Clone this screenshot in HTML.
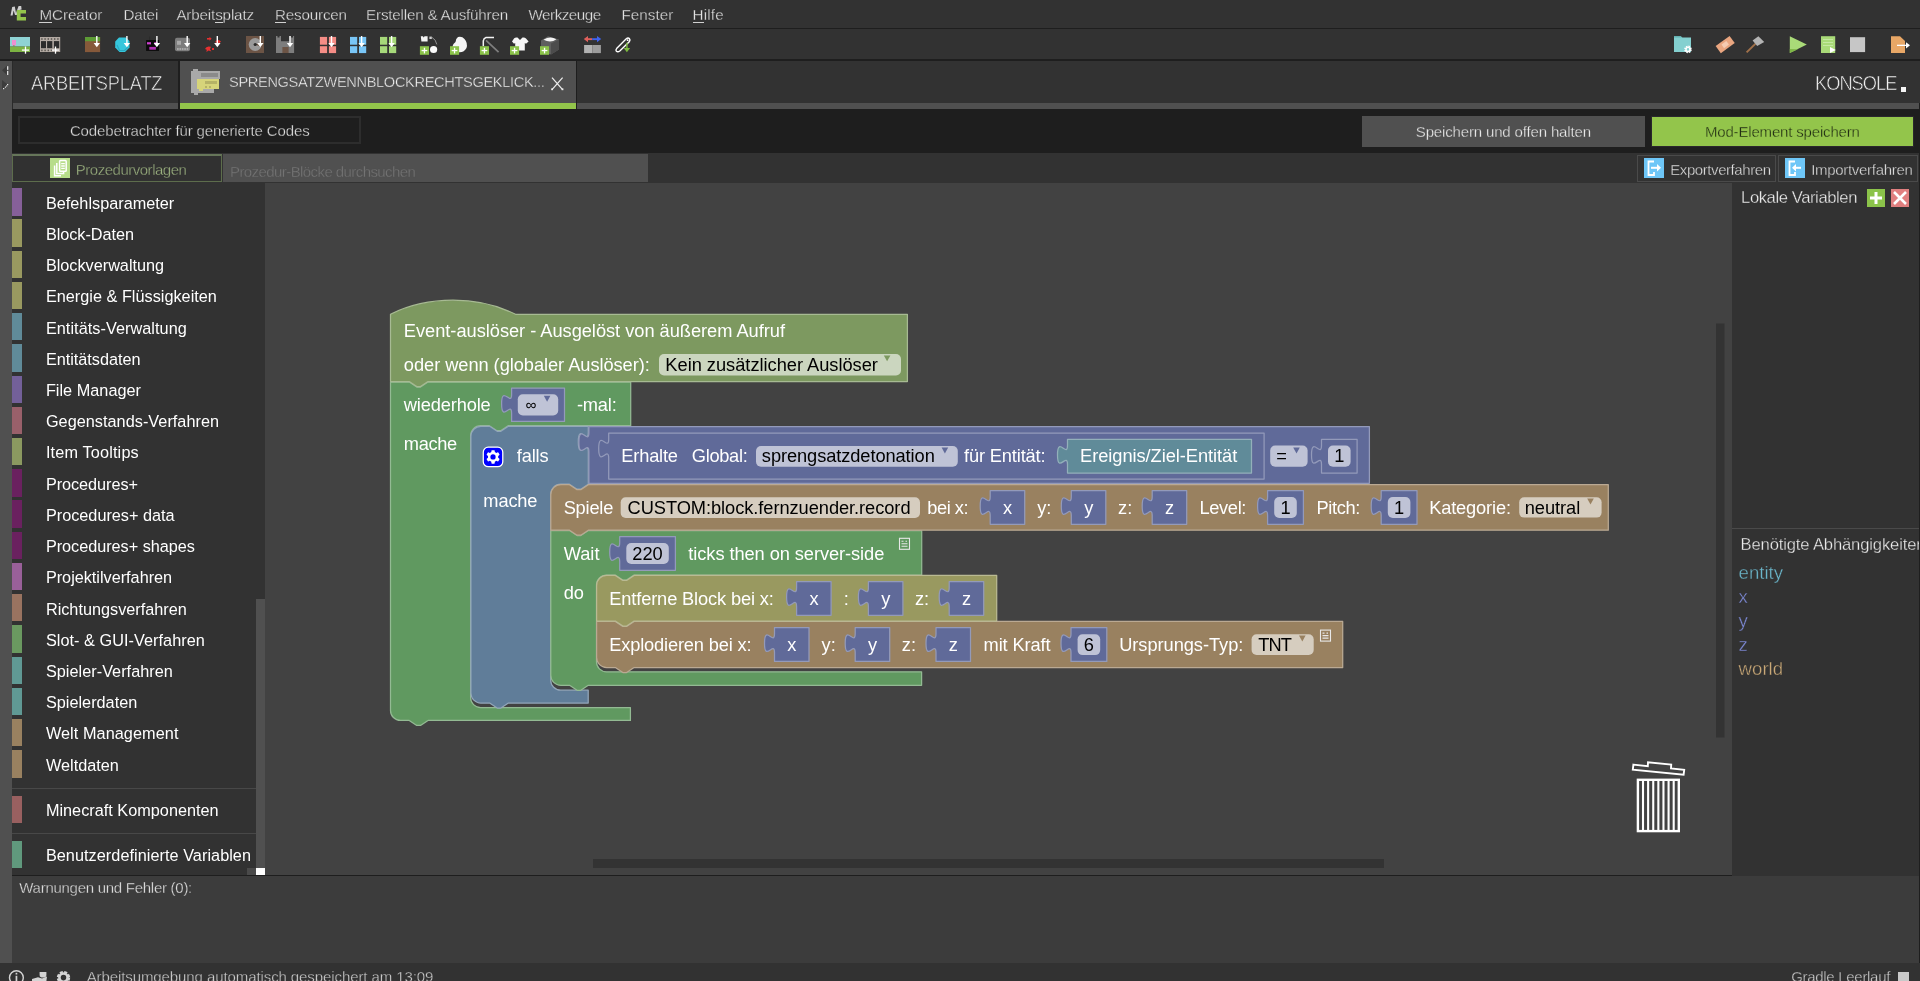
<!DOCTYPE html>
<html lang="de"><head><meta charset="utf-8"><title>MCreator</title>
<style>
html,body{margin:0;padding:0;background:#323232;}
body{width:1920px;height:981px;overflow:hidden;position:relative;font-family:"Liberation Sans", sans-serif;}
#app{position:absolute;left:0;top:0;width:1920px;height:981px;will-change:transform;}
.a{position:absolute;}
.t{position:absolute;white-space:pre;font-family:"Liberation Sans", sans-serif;}
svg{position:absolute;overflow:visible;}
svg text{font-family:"Liberation Sans", sans-serif;white-space:pre;}
</style></head><body><div id="app">
<div class="a" style="left:0px;top:0px;width:1920px;height:28px;background:#323232;"></div>
<div class="a" style="left:0px;top:28px;width:1920px;height:1px;background:#1e1e1e;"></div>
<div class="a" style="left:0px;top:29px;width:1920px;height:30px;background:#323232;"></div>
<div class="a" style="left:0px;top:59px;width:1920px;height:2px;background:#1e1e1e;"></div>
<div class="a" style="left:0px;top:61px;width:1920px;height:42px;background:#323232;"></div>
<div class="a" style="left:12px;top:103px;width:1908px;height:6px;background:#505050;"></div>
<div class="a" style="left:12px;top:109px;width:1908px;height:44px;background:#1e1e1e;"></div>
<div class="a" style="left:12px;top:153px;width:1908px;height:30px;background:#323232;"></div>
<div class="a" style="left:12px;top:183px;width:253px;height:692px;background:#323232;"></div>
<div class="a" style="left:265px;top:183px;width:1467px;height:692px;background:#424242;"></div>
<div class="a" style="left:1732px;top:183px;width:188px;height:692px;background:#323232;"></div>
<div class="a" style="left:12px;top:875px;width:1720px;height:1px;background:#1e1e1e;"></div>
<div class="a" style="left:1732px;top:875px;width:187px;height:1px;background:#323232;"></div>
<div class="a" style="left:12px;top:876px;width:1908px;height:87px;background:#3c3c3c;"></div>
<div class="a" style="left:0px;top:963px;width:1920px;height:18px;background:#323232;"></div>
<div class="a" style="left:0px;top:61px;width:12px;height:902px;background:#505050;"></div>
<div class="a" style="left:1919px;top:61px;width:1px;height:902px;background:#1e1e1e;"></div>
<div class="t" style="left:39.40px;top:4.93px;font-size:15.2px;line-height:20px;color:#e2e2e2;letter-spacing:-0.044px;-webkit-text-stroke:0.3px #323232">MCreator</div>
<div class="a" style="left:39.4px;top:22px;width:12.7px;height:1px;background:#d0d0d0;"></div>
<div class="t" style="left:123.40px;top:4.93px;font-size:15.2px;line-height:20px;color:#e2e2e2;letter-spacing:-0.137px;-webkit-text-stroke:0.3px #323232">Datei</div>
<div class="t" style="left:176.40px;top:4.93px;font-size:15.2px;line-height:20px;color:#e2e2e2;letter-spacing:-0.151px;-webkit-text-stroke:0.3px #323232">Arbeitsplatz</div>
<div class="a" style="left:215.2px;top:22px;width:7.6px;height:1px;background:#d0d0d0;"></div>
<div class="t" style="left:275.00px;top:4.93px;font-size:15.2px;line-height:20px;color:#e2e2e2;letter-spacing:-0.179px;-webkit-text-stroke:0.3px #323232">Resourcen</div>
<div class="a" style="left:275.0px;top:22px;width:11.0px;height:1px;background:#d0d0d0;"></div>
<div class="t" style="left:366.10px;top:4.93px;font-size:15.2px;line-height:20px;color:#e2e2e2;letter-spacing:-0.199px;-webkit-text-stroke:0.3px #323232">Erstellen &amp; Ausführen</div>
<div class="t" style="left:528.50px;top:4.93px;font-size:15.2px;line-height:20px;color:#e2e2e2;letter-spacing:-0.478px;-webkit-text-stroke:0.3px #323232">Werkzeuge</div>
<div class="t" style="left:621.50px;top:4.93px;font-size:15.2px;line-height:20px;color:#e2e2e2;letter-spacing:0.038px;-webkit-text-stroke:0.3px #323232">Fenster</div>
<div class="t" style="left:692.60px;top:4.93px;font-size:15.2px;line-height:20px;color:#e2e2e2;letter-spacing:0.158px;-webkit-text-stroke:0.3px #323232">Hilfe</div>
<div class="a" style="left:692.6px;top:22px;width:11.0px;height:1px;background:#d0d0d0;"></div>
<svg style="left:10px;top:4px" width="18" height="19" viewBox="0 0 18 19">
<path d="M0.5 11.5 L2.2 3 L4.8 2.6 L6 9 L8.6 2 L11.2 2 L11.6 5.5 L9.5 6 L7 11 L5 11 L3.6 6.5 L2.6 11.5Z" fill="#cfcfcf"/>
<path d="M6.8 6 H16 V9.6 H10.6 V13 H16 V16.6 H6.8Z" fill="#93c54b"/></svg>
<svg style="left:0;top:29px" width="1920" height="30" viewBox="0 29 1920 30"><rect x="10" y="37" width="20" height="9.6" fill="#8fd3d4" /><rect x="10" y="46.6" width="20" height="5.4" fill="#7cb342" /><rect x="12" y="40" width="4" height="5.3" fill="#ee8fd0" /><rect x="13.4" y="45" width="1" height="1.6" fill="#a1714a" /><rect x="24.85" y="46.5" width="1.3" height="7.2" fill="#fff" /><rect x="21.9" y="49.45" width="7.2" height="1.3" fill="#fff" /><rect x="40" y="37" width="20.2" height="15" fill="#b3aaa3" /><rect x="41" y="41.1" width="5" height="7.1" fill="#2b2b2b" /><rect x="47.1" y="41.1" width="5.2" height="7.1" fill="#2b2b2b" /><rect x="53.9" y="41.1" width="5.3" height="7.1" fill="#2b2b2b" /><rect x="41.2" y="38.2" width="1.4" height="1.6" fill="#5a5651" /><rect x="41.2" y="49.6" width="1.4" height="1.6" fill="#5a5651" /><rect x="44.400000000000006" y="38.2" width="1.4" height="1.6" fill="#5a5651" /><rect x="44.400000000000006" y="49.6" width="1.4" height="1.6" fill="#5a5651" /><rect x="47.6" y="38.2" width="1.4" height="1.6" fill="#5a5651" /><rect x="47.6" y="49.6" width="1.4" height="1.6" fill="#5a5651" /><rect x="50.800000000000004" y="38.2" width="1.4" height="1.6" fill="#5a5651" /><rect x="50.800000000000004" y="49.6" width="1.4" height="1.6" fill="#5a5651" /><rect x="54.0" y="38.2" width="1.4" height="1.6" fill="#5a5651" /><rect x="54.0" y="49.6" width="1.4" height="1.6" fill="#5a5651" /><rect x="57.2" y="38.2" width="1.4" height="1.6" fill="#5a5651" /><rect x="57.2" y="49.6" width="1.4" height="1.6" fill="#5a5651" /><rect x="54.85" y="46.5" width="1.3" height="7.2" fill="#fff" /><rect x="51.9" y="49.45" width="7.2" height="1.3" fill="#fff" /><rect x="85" y="37" width="15.1" height="15.1" fill="#86593a" /><rect x="85" y="37" width="15.1" height="4.2" fill="#5d9b35" /><rect x="96.1" y="36" width="1.4" height="8.200000000000003" fill="#ffffff"/><path d="M 93.6,43.0 H 100.0 L 96.8,47.2 Z" fill="#ffffff"/><path d="M119 37.5 H126 L129.5 41 V47.5 L125 52 H119.5 L115.2 47.5 V41.5Z" fill="#35c6dc"/><path d="M117 45 L119.5 50.5 H124.5 L128 47" stroke="#2aa9c0" stroke-width="1.2" fill="none"/><rect x="126.2" y="36" width="1.4" height="8.200000000000003" fill="#ffffff"/><path d="M 123.7,43.0 H 130.1 L 126.9,47.2 Z" fill="#ffffff"/><rect x="146.1" y="40" width="12.9" height="10.9" fill="#0b0b0b" /><rect x="147" y="42.2" width="4" height="2.2" fill="#cf3fd0" /><rect x="154.2" y="42.2" width="3.4" height="2.2" fill="#cf3fd0" /><rect x="149.3" y="46.9" width="6.6" height="2.8" fill="#b02fb2" /><rect x="149" y="36.5" width="1.2" height="3.5" fill="#2a2a2a" /><rect x="156.20000000000002" y="36" width="1.4" height="8.200000000000003" fill="#ffffff"/><path d="M 153.70000000000002,43.0 H 160.1 L 156.9,47.2 Z" fill="#ffffff"/><rect x="175" y="37.8" width="15" height="13.4" rx="2" fill="#7c7c7c"/><rect x="177" y="40.8" width="4" height="4" fill="#a9a9a9" /><rect x="177.0" y="48" width="1.7" height="2.1" fill="#a9a9a9" /><rect x="179.4" y="48" width="1.7" height="2.1" fill="#a9a9a9" /><rect x="181.8" y="48" width="1.7" height="2.1" fill="#a9a9a9" /><rect x="184.2" y="48" width="1.7" height="2.1" fill="#a9a9a9" /><rect x="186.6" y="48" width="1.7" height="2.1" fill="#a9a9a9" /><rect x="186.5" y="36" width="1.4" height="8.200000000000003" fill="#ffffff"/><path d="M 184.0,43.0 H 190.39999999999998 L 187.2,47.2 Z" fill="#ffffff"/><g fill="#e53030"><rect x="207" y="38" width="3" height="1.6"/><path d="M209.5 36.8 L211.6 38.8 L209.5 40.8Z"/><path d="M215.5 41.2 Q218.5 38.5 221 41.5 L219.5 43 L215.5 42.5Z"/><path d="M205 49 Q206 46.4 208.6 46.4 L211 46.8 L210 49.2 L211.4 51.6 L208.6 50.4 L206.4 52 L206.8 49.8Z"/><rect x="212" y="48" width="2" height="2"/></g><rect x="216.60000000000002" y="36" width="1.4" height="8.200000000000003" fill="#ffffff"/><path d="M 214.10000000000002,43.0 H 220.5 L 217.3,47.2 Z" fill="#ffffff"/><rect x="246" y="36" width="18" height="17" fill="#6c5445" /><circle cx="255.2" cy="44.5" r="6.5" fill="#9a9a9a"/><path d="M255.2 44.5 L262 41.5 V47.5Z" fill="#6c5445"/><circle cx="255.2" cy="44.5" r="1.6" fill="#2b2b2b"/><rect x="259.6" y="36" width="1.4" height="8.200000000000003" fill="#ffffff"/><path d="M 257.1,43.0 H 263.5 L 260.3,47.2 Z" fill="#ffffff"/><path d="M276 36 H277.5 V37.5 H279.5 V36 H281 V41.3 H289.6 V36 H291 V37.5 H293 V36 H294.1 V53 H276Z" fill="#7d7d7d"/><rect x="282.4" y="47" width="6.2" height="6" fill="#6c5445" /><rect x="289.3" y="36" width="1.4" height="8.200000000000003" fill="#ffffff"/><path d="M 286.8,43.0 H 293.2 L 290,47.2 Z" fill="#ffffff"/><rect x="319.9" y="36.9" width="7.2" height="7.8" fill="#f58d86" /><rect x="328.9" y="36.9" width="7.2" height="7.8" fill="#f58d86" /><rect x="319.9" y="46.2" width="7.2" height="6.9" fill="#f58d86" /><rect x="328.9" y="46.2" width="7.2" height="6.9" fill="#f58d86" /><rect x="330.8" y="36" width="1.4" height="8.200000000000003" fill="#ffffff"/><path d="M 328.3,43.0 H 334.7 L 331.5,47.2 Z" fill="#ffffff"/><rect x="350" y="36.9" width="7.2" height="7.8" fill="#79c6f7" /><rect x="359" y="36.9" width="7.2" height="7.8" fill="#79c6f7" /><rect x="350" y="46.2" width="7.2" height="6.9" fill="#79c6f7" /><rect x="359" y="46.2" width="7.2" height="6.9" fill="#79c6f7" /><rect x="360.90000000000003" y="36" width="1.4" height="8.200000000000003" fill="#ffffff"/><path d="M 358.40000000000003,43.0 H 364.8 L 361.6,47.2 Z" fill="#ffffff"/><rect x="380" y="36.9" width="7.2" height="7.8" fill="#a6d97a" /><rect x="389" y="36.9" width="7.2" height="7.8" fill="#a6d97a" /><rect x="380" y="46.2" width="7.2" height="6.9" fill="#a6d97a" /><rect x="389" y="46.2" width="7.2" height="6.9" fill="#a6d97a" /><rect x="390.90000000000003" y="36" width="1.4" height="8.200000000000003" fill="#ffffff"/><path d="M 388.40000000000003,43.0 H 394.8 L 391.6,47.2 Z" fill="#ffffff"/><rect x="419.9" y="46.2" width="9.1" height="8.6" fill="#8bc34a" /><rect x="423.79999999999995" y="47.800000000000004" width="1.3" height="5.6" fill="#fff" /><rect x="421.59999999999997" y="49.900000000000006" width="5.7" height="1.3" fill="#fff" /><path d="M420.8 36.2 H423 L423.6 37.4 L424.6 36.2 H427.6 V41.6 H421.4Z" fill="#f4f4f4"/><rect x="429.4" y="36.6" width="2.4" height="2.4" fill="#cfcfcf"/><path d="M431.8 37.2 Q436 39.5 436.8 44.4" stroke="#9a9a9a" stroke-width="0.9" fill="none"/><circle cx="433.6" cy="49.5" r="3.6" fill="#fbfbfb"/><path d="M458 37 Q462 36 464.5 39 Q468 43 466.5 48 Q464 52.8 458.5 52.2 L455 50 L452.4 46.5 Q453 43.5 455.5 42 Q455.8 38.5 458 37Z" fill="#f6f6f6"/><rect x="450" y="46.2" width="9.1" height="8.6" fill="#8bc34a" /><rect x="453.9" y="47.800000000000004" width="1.3" height="5.6" fill="#fff" /><rect x="451.7" y="49.900000000000006" width="5.7" height="1.3" fill="#fff" /><path d="M486 40.4 L498.6 52.2" stroke="#7f7f7f" stroke-width="1.7"/><path d="M483.3 46.2 V40.8 Q483.6 38.2 486 37.5 H494" stroke="#f4f4f4" stroke-width="1.5" fill="none"/><rect x="479.9" y="46.2" width="9.1" height="8.6" fill="#8bc34a" /><rect x="483.79999999999995" y="47.800000000000004" width="1.3" height="5.6" fill="#fff" /><rect x="481.59999999999997" y="49.900000000000006" width="5.7" height="1.3" fill="#fff" /><path d="M514 38.5 Q515.5 37 517.5 37.6 L520 40 L522.5 37.6 Q524.5 37 526 38.5 L528.6 41.5 L526 43.8 L524.8 43 V50.6 H515.2 V43 L514 43.8 L512 41.5Z" fill="#f7f7f7"/><rect x="510" y="46.2" width="9.1" height="8.6" fill="#8bc34a" /><rect x="513.9" y="47.800000000000004" width="1.3" height="5.6" fill="#fff" /><rect x="511.7" y="49.900000000000006" width="5.7" height="1.3" fill="#fff" /><path d="M541 40.5 L548 36.3 L559 39.5 V49.5 L551 54.6 L541 51.5Z" fill="#5f5f5f"/><path d="M551 43.5 L559 39.5 V49.5 L551 54.6Z" fill="#4c4c4c"/><path d="M543.5 39.8 Q550 35.5 556.4 39.2 Q551 43.4 543.5 39.8Z" fill="#f4f4f4"/><rect x="540" y="46.2" width="9.1" height="8.6" fill="#8bc34a" /><rect x="543.9" y="47.800000000000004" width="1.3" height="5.6" fill="#fff" /><rect x="541.7" y="49.900000000000006" width="5.7" height="1.3" fill="#fff" /><rect x="586.5" y="38.2" width="5.8" height="1.9" fill="#e0605c" /><path d="M583.8 39.1 L588 36 V42.2Z" fill="#e0605c"/><rect x="592.2" y="38.2" width="5.6" height="1.9" fill="#3f63ee" /><path d="M601.2 39.1 L597 36 V42.2Z" fill="#3f63ee"/><rect x="584.1" y="45" width="8.4" height="8.1" fill="#b2b2b2" /><rect x="592.5" y="45" width="8.4" height="8.1" fill="#9d9d9d" /><path d="M616.6 48.6 L626 39 Q628 37.4 629.4 38.6 Q630.6 40 629 42 L619.8 51 Q617.8 52.4 616.4 51.2 Q615.4 50 616.6 48.6Z" fill="none" stroke="#ffffff" stroke-width="1.4"/><circle cx="627.6" cy="40.2" r="0.9" fill="#fff"/><rect x="626.1999999999999" y="42.8" width="1.4" height="6.400000000000006" fill="#7cb83f"/><path d="M 623.6999999999999,48.0 H 630.1 L 626.9,52.2 Z" fill="#7cb83f"/><path d="M1674 36.2 H1680.6 L1682.4 37.6 H1691 V52 H1674Z" fill="#84d0d0"/><path d="M1674 36.2 H1680.6 L1682.4 37.6 H1674Z" fill="#62b4b4"/><circle cx="1688" cy="49.4" r="2.7" fill="none" stroke="#fff" stroke-width="2.2" stroke-dasharray="1.4 0.72"/><circle cx="1688" cy="49.4" r="2" fill="none" stroke="#fff" stroke-width="1.4"/><g transform="rotate(-36 1725.2 44.6)"><rect x="1716.6" y="40.2" width="17.2" height="8.8" fill="#eaa680"/><rect x="1722.2" y="42.4" width="6" height="4.4" fill="#f5cbb2"/></g><path d="M1746.6 52.4 L1755.6 43.6" stroke="#a1714a" stroke-width="2"/><path d="M1752.6 40.6 L1758.4 36.2 L1764.2 42 L1757.2 46Z" fill="#b4b4b4"/><path d="M1789.8 36.2 L1806.8 44.6 L1789.8 53Z" fill="#a9da78"/><path d="M1789.8 49 L1798 49.2 L1789.8 53Z" fill="#7fb648"/><rect x="1821" y="36.2" width="14.2" height="16.8" fill="#a9da78" /><rect x="1823" y="39" width="10" height="0.9" fill="#c9eaa8" /><rect x="1823" y="42" width="10" height="0.9" fill="#c9eaa8" /><rect x="1823" y="45" width="10" height="0.9" fill="#c9eaa8" /><path d="M1830 47 L1835.8 50 L1830 53Z" fill="#fff"/><rect x="1850" y="37.2" width="15.1" height="14.9" fill="#c6c6c6" /><path d="M1891 36.2 H1900 L1905 41 V53 H1891Z" fill="#e8a766"/><rect x="1897" y="44.7" width="10" height="1.3" fill="#fff" /><path d="M1906 42.2 L1910 45.3 L1906 48.4Z" fill="#fff"/></svg>
<div class="a" style="left:178px;top:61px;width:2px;height:48px;background:#1e1e1e;"></div>
<div class="a" style="left:180px;top:61px;width:396px;height:42px;background:#505050;"></div>
<div class="a" style="left:180px;top:103px;width:396px;height:6px;background:#93c54b;"></div>
<div class="a" style="left:576px;top:61px;width:1px;height:48px;background:#1e1e1e;"></div>
<div class="a" style="left:577px;top:61px;width:1343px;height:42px;background:#323232;"></div>
<div class="a" style="left:12px;top:61px;width:1px;height:48px;background:#2a2a2a;"></div>
<svg style="left:0px;top:61px" width="12" height="32" viewBox="0 61 12 32"><path d="M7 65.5 V75 L2 70.2Z" fill="#3c3c3c"/><rect x="7" y="66.2" width="1.3" height="3.6" fill="#dcdcdc"/><rect x="7" y="71" width="1.3" height="4" fill="#dcdcdc"/><path d="M2 80 V89.4 L7.6 84.6Z" fill="#3c3c3c"/><rect x="3" y="88" width="1.2" height="1.2" fill="#e4e4e4"/><rect x="4.9" y="86.6" width="1.1" height="1.1" fill="#e4e4e4"/><rect x="6.1" y="85.4" width="1.1" height="1.1" fill="#e4e4e4"/><rect x="7" y="84" width="1.2" height="1.2" fill="#e4e4e4"/></svg>
<div class="t" style="left:30.80px;top:69.97px;font-size:20.3px;line-height:26px;color:#f2f2f2;letter-spacing:-0.207px;transform:scaleX(0.9);transform-origin:0 0;-webkit-text-stroke:0.6px #323232;">ARBEITSPLATZ</div>
<div class="t" style="left:229.00px;top:73.24px;font-size:14.6px;line-height:19px;color:#f2f2f2;letter-spacing:-0.338px;-webkit-text-stroke:0.35px #505050;">SPRENGSATZWENNBLOCKRECHTSGEKLICK...</div>
<div class="t" style="left:1814.80px;top:69.97px;font-size:20.3px;line-height:26px;color:#f2f2f2;letter-spacing:-1.099px;transform:scaleX(0.9);transform-origin:0 0;-webkit-text-stroke:0.6px #323232;">KONSOLE</div>
<div class="a" style="left:1901px;top:87px;width:5px;height:5px;background:#f5f5f5;"></div>
<svg style="left:550px;top:75px" width="15" height="17" viewBox="550 75 15 17"><path d="M552 77.6 L562.6 89.6 M562.6 77.6 L552 89.6" stroke="#ececec" stroke-width="1.25" fill="none"/><rect x="551.2" y="88.4" width="1.8" height="1.8" fill="#ececec"/><rect x="561.6" y="88.4" width="1.8" height="1.8" fill="#ececec"/></svg>
<svg style="left:190px;top:68px" width="31" height="28" viewBox="0 0 31 28" shape-rendering="crispEdges">
<rect x="1" y="3" width="8" height="22" fill="#a9a9a9"/><rect x="3" y="1" width="5" height="3" fill="#a9a9a9"/><rect x="4" y="24" width="4" height="3" fill="#a9a9a9"/>
<rect x="8" y="3" width="22" height="8" fill="#a9a9a9"/><rect x="11" y="5" width="17" height="4" fill="#8a8a8a"/>
<rect x="8" y="19" width="16" height="6" fill="#a9a9a9"/>
<rect x="7" y="11" width="22" height="10" fill="#d6d47a"/><rect x="9" y="20" width="4" height="3" fill="#d6d47a"/>
<rect x="15" y="13" width="12" height="3" fill="#b5b266"/><rect x="15" y="18" width="2" height="1.5" fill="#b5b266"/><rect x="19" y="18" width="2" height="1.5" fill="#b5b266"/>
</svg>
<div class="a" style="left:18px;top:116px;width:343px;height:28px;background:#1e1e1e;box-sizing:border-box;border:2px solid #2d2d2d;"></div>
<div class="t" style="left:69.90px;top:120.80px;font-size:15px;line-height:20px;color:#e0e0e0;letter-spacing:-0.134px;-webkit-text-stroke:0.3px #1e1e1e;">Codebetrachter für generierte Codes</div>
<div class="a" style="left:1362px;top:116px;width:283px;height:31px;background:#505050;"></div>
<div class="t" style="left:1415.80px;top:122.30px;font-size:15px;line-height:20px;color:#ececec;letter-spacing:-0.153px;-webkit-text-stroke:0.3px #505050;">Speichern und offen halten</div>
<div class="a" style="left:1651px;top:116px;width:263px;height:31px;background:#2a272d;"></div>
<div class="a" style="left:1652px;top:117px;width:261px;height:29px;background:#93c54b;"></div>
<div class="t" style="left:1704.90px;top:122.10px;font-size:15px;line-height:20px;color:#1f2a12;letter-spacing:-0.170px;-webkit-text-stroke:0.3px #93c54b;">Mod-Element speichern</div>
<div class="a" style="left:12px;top:154px;width:210px;height:28px;background:#313131;box-sizing:border-box;border:1px solid #5d6d4c;border-top:2px solid #66765a;"></div>
<svg style="left:50px;top:158px" width="20" height="20" viewBox="0 0 20 20"><rect width="20" height="20" fill="#b7dd8a"/>
<path d="M4.6 7.6 V17.8 H11" fill="none" stroke="#fff" stroke-width="1.5"/><path d="M6.8 5 V15.6 H13.6 V14" fill="none" stroke="#fff" stroke-width="1.5"/>
<rect x="9.6" y="2.6" width="6.6" height="10.6" rx="0.8" fill="none" stroke="#fff" stroke-width="1.5"/><path d="M11.2 5.6 H14.8 M11.2 8 H14.8 M11.2 10.4 H14.8" stroke="#fff" stroke-width="1.3"/></svg>
<div class="t" style="left:75.80px;top:160.20px;font-size:15px;line-height:20px;color:#9cb280;letter-spacing:-0.488px;-webkit-text-stroke:0.3px #313131;">Prozedurvorlagen</div>
<div class="a" style="left:223px;top:154px;width:425px;height:28px;background:#505050;"></div>
<div class="t" style="left:230.00px;top:162.10px;font-size:15px;line-height:20px;color:#747474;letter-spacing:-0.578px;-webkit-text-stroke:0.3px #505050;">Prozedur-Blöcke durchsuchen</div>
<div class="a" style="left:1637px;top:155px;width:139px;height:27px;background:#323232;box-sizing:border-box;border:1px solid #4a4a4a;"></div>
<div class="a" style="left:1778px;top:155px;width:140px;height:27px;background:#323232;box-sizing:border-box;border:1px solid #4a4a4a;"></div>
<svg style="left:1644px;top:158px" width="20" height="20" viewBox="0 0 20 20"><rect width="20" height="20" fill="#6ec6f7"/>
<path d="M10 3.5 H4.5 V17 H10 V14" fill="none" stroke="#fff" stroke-width="1.8"/><rect x="7" y="8.8" width="8" height="2" fill="#fff"/><path d="M13 6 L17 9.8 L13 13.6Z" fill="#fff"/></svg>
<div class="t" style="left:1670.30px;top:159.50px;font-size:15px;line-height:20px;color:#dedede;letter-spacing:-0.430px;-webkit-text-stroke:0.3px #323232;">Exportverfahren</div>
<svg style="left:1785px;top:158px" width="20" height="20" viewBox="0 0 20 20"><rect width="20" height="20" fill="#6ec6f7"/>
<path d="M10 3.5 H4.5 V17 H10 V14" fill="none" stroke="#fff" stroke-width="1.8"/><rect x="9" y="8.8" width="7" height="2" fill="#fff"/><path d="M11 6 L7 9.8 L11 13.6Z" fill="#fff"/></svg>
<div class="t" style="left:1811.20px;top:159.50px;font-size:15px;line-height:20px;color:#dedede;letter-spacing:-0.307px;-webkit-text-stroke:0.3px #323232;">Importverfahren</div>
<div class="a" style="left:12px;top:188.2px;width:10px;height:27.4px;background:#866099;"></div>
<div class="t" style="left:45.90px;top:192.67px;font-size:16.25px;line-height:21px;color:#ffffff;letter-spacing:0.007px;">Befehlsparameter</div>
<div class="a" style="left:12px;top:219.42px;width:10px;height:27.4px;background:#999960;"></div>
<div class="t" style="left:45.90px;top:223.89px;font-size:16.25px;line-height:21px;color:#ffffff;letter-spacing:-0.038px;">Block-Daten</div>
<div class="a" style="left:12px;top:250.64px;width:10px;height:27.4px;background:#999960;"></div>
<div class="t" style="left:45.90px;top:255.11px;font-size:16.25px;line-height:21px;color:#ffffff;letter-spacing:-0.007px;">Blockverwaltung</div>
<div class="a" style="left:12px;top:281.86px;width:10px;height:27.4px;background:#999960;"></div>
<div class="t" style="left:45.90px;top:286.33px;font-size:16.25px;line-height:21px;color:#ffffff;letter-spacing:0.013px;">Energie &amp; Flüssigkeiten</div>
<div class="a" style="left:12px;top:313.08px;width:10px;height:27.4px;background:#608b99;"></div>
<div class="t" style="left:45.90px;top:317.55px;font-size:16.25px;line-height:21px;color:#ffffff;letter-spacing:0.050px;">Entitäts-Verwaltung</div>
<div class="a" style="left:12px;top:344.3px;width:10px;height:27.4px;background:#608b99;"></div>
<div class="t" style="left:45.90px;top:348.77px;font-size:16.25px;line-height:21px;color:#ffffff;letter-spacing:-0.017px;">Entitätsdaten</div>
<div class="a" style="left:12px;top:375.52px;width:10px;height:27.4px;background:#736099;"></div>
<div class="t" style="left:45.90px;top:379.99px;font-size:16.25px;line-height:21px;color:#ffffff;letter-spacing:0.026px;">File Manager</div>
<div class="a" style="left:12px;top:406.74px;width:10px;height:27.4px;background:#99606a;"></div>
<div class="t" style="left:45.90px;top:411.21px;font-size:16.25px;line-height:21px;color:#ffffff;letter-spacing:0.031px;">Gegenstands-Verfahren</div>
<div class="a" style="left:12px;top:437.96px;width:10px;height:27.4px;background:#8b9960;"></div>
<div class="t" style="left:45.90px;top:442.43px;font-size:16.25px;line-height:21px;color:#ffffff;letter-spacing:0.157px;">Item Tooltips</div>
<div class="a" style="left:12px;top:469.18px;width:10px;height:27.4px;background:#6a215f;"></div>
<div class="t" style="left:45.90px;top:473.65px;font-size:16.25px;line-height:21px;color:#ffffff;letter-spacing:-0.053px;">Procedures+</div>
<div class="a" style="left:12px;top:500.4px;width:10px;height:27.4px;background:#6a215f;"></div>
<div class="t" style="left:45.90px;top:504.87px;font-size:16.25px;line-height:21px;color:#ffffff;letter-spacing:0.001px;">Procedures+ data</div>
<div class="a" style="left:12px;top:531.62px;width:10px;height:27.4px;background:#6a215f;"></div>
<div class="t" style="left:45.90px;top:536.09px;font-size:16.25px;line-height:21px;color:#ffffff;letter-spacing:-0.029px;">Procedures+ shapes</div>
<div class="a" style="left:12px;top:562.84px;width:10px;height:27.4px;background:#996099;"></div>
<div class="t" style="left:45.90px;top:567.31px;font-size:16.25px;line-height:21px;color:#ffffff;letter-spacing:-0.013px;">Projektilverfahren</div>
<div class="a" style="left:12px;top:594.06px;width:10px;height:27.4px;background:#997360;"></div>
<div class="t" style="left:45.90px;top:598.53px;font-size:16.25px;line-height:21px;color:#ffffff;letter-spacing:0.001px;">Richtungsverfahren</div>
<div class="a" style="left:12px;top:625.28px;width:10px;height:27.4px;background:#6a9960;"></div>
<div class="t" style="left:45.90px;top:629.75px;font-size:16.25px;line-height:21px;color:#ffffff;letter-spacing:0.043px;">Slot- &amp; GUI-Verfahren</div>
<div class="a" style="left:12px;top:656.5px;width:10px;height:27.4px;background:#609994;"></div>
<div class="t" style="left:45.90px;top:660.97px;font-size:16.25px;line-height:21px;color:#ffffff;letter-spacing:0.031px;">Spieler-Verfahren</div>
<div class="a" style="left:12px;top:687.72px;width:10px;height:27.4px;background:#609994;"></div>
<div class="t" style="left:45.90px;top:692.19px;font-size:16.25px;line-height:21px;color:#ffffff;letter-spacing:0.014px;">Spielerdaten</div>
<div class="a" style="left:12px;top:718.94px;width:10px;height:27.4px;background:#998160;"></div>
<div class="t" style="left:45.90px;top:723.41px;font-size:16.25px;line-height:21px;color:#ffffff;letter-spacing:0.068px;">Welt Management</div>
<div class="a" style="left:12px;top:750.16px;width:10px;height:27.4px;background:#998160;"></div>
<div class="t" style="left:45.90px;top:754.63px;font-size:16.25px;line-height:21px;color:#ffffff;letter-spacing:0.015px;">Weltdaten</div>
<div class="a" style="left:12px;top:788px;width:244px;height:1px;background:#484848;"></div>
<div class="a" style="left:12px;top:796px;width:10px;height:27px;background:#996060;"></div>
<div class="t" style="left:45.90px;top:800.27px;font-size:16.25px;line-height:21px;color:#ffffff;letter-spacing:0.011px;">Minecraft Komponenten</div>
<div class="a" style="left:12px;top:833px;width:244px;height:1px;background:#484848;"></div>
<div class="a" style="left:12px;top:841px;width:10px;height:27px;background:#60997d;"></div>
<div class="t" style="left:45.90px;top:845.07px;font-size:16.25px;line-height:21px;color:#ffffff;letter-spacing:0.046px;">Benutzerdefinierte Variablen</div>
<div class="a" style="left:256px;top:599px;width:9px;height:269px;background:#505050;"></div>
<div class="a" style="left:247px;top:868px;width:9px;height:7px;background:#4a4a4a;"></div>
<div class="a" style="left:256px;top:868px;width:9px;height:7px;background:#ffffff;"></div>
<div class="t" style="left:1741.10px;top:186.95px;font-size:16.6px;line-height:22px;color:#ececec;letter-spacing:-0.408px;-webkit-text-stroke:0.3px #323232;">Lokale Variablen</div>
<svg style="left:1867px;top:189px" width="18" height="18" viewBox="0 0 18 18"><rect width="18" height="18" fill="#8bc34a"/><rect x="7.5" y="3" width="3" height="12" fill="#fff"/><rect x="3" y="7.5" width="12" height="3" fill="#fff"/></svg>
<svg style="left:1891px;top:189px" width="18" height="18" viewBox="0 0 18 18"><rect width="18" height="18" fill="#e07f7f"/><path d="M3 3 L15 15 M15 3 L3 15" stroke="#fff" stroke-width="2.6"/></svg>
<div class="a" style="left:1732px;top:528px;width:187px;height:1px;background:#4a4a4a;"></div>
<div class="a" style="left:1732px;top:529px;width:187px;height:40px;overflow:hidden">
<div class="t " style="left:8.60px;top:5.25px;font-size:16.6px;line-height:22px;color:#ececec;letter-spacing:-0.146px;-webkit-text-stroke:0.3px #323232;">Benötigte Abhängigkeiten</div>
</div>
<div class="t " style="left:1738.60px;top:561.16px;font-size:18.6px;line-height:24px;color:#6bb5c9;letter-spacing:0.007px;-webkit-text-stroke:0.35px #323232;">entity</div>
<div class="t " style="left:1738.60px;top:585.01px;font-size:18.6px;line-height:24px;color:#7a86cf;-webkit-text-stroke:0.35px #323232;">x</div>
<div class="t " style="left:1738.60px;top:608.86px;font-size:18.6px;line-height:24px;color:#7a86cf;-webkit-text-stroke:0.35px #323232;">y</div>
<div class="t " style="left:1738.60px;top:632.71px;font-size:18.6px;line-height:24px;color:#7a86cf;-webkit-text-stroke:0.35px #323232;">z</div>
<div class="t " style="left:1738.60px;top:656.56px;font-size:18.6px;line-height:24px;color:#c9a877;letter-spacing:0.010px;-webkit-text-stroke:0.35px #323232;">world</div>
<div class="t" style="left:19.30px;top:877.80px;font-size:15px;line-height:20px;color:#e0e0e0;letter-spacing:-0.273px;-webkit-text-stroke:0.3px #3c3c3c;">Warnungen und Fehler (0):</div>
<div class="a" style="left:0;top:963px;width:1920px;height:18px;overflow:hidden">
<div class="t" style="left:86.70px;top:3.80px;font-size:15px;line-height:20px;color:#cccccc;letter-spacing:-0.093px;-webkit-text-stroke:0.3px #323232;">Arbeitsumgebung automatisch gespeichert am 13:09</div>
<div class="t" style="left:1791.20px;top:3.80px;font-size:15px;line-height:20px;color:#cccccc;letter-spacing:-0.302px;-webkit-text-stroke:0.3px #323232;">Gradle Leerlauf</div>
<svg style="left:8px;top:6px" width="66" height="16" viewBox="8 969 66 16"><circle cx="16.4" cy="977.6" r="6.9" fill="none" stroke="#d4d4d4" stroke-width="1.4"/><rect x="15.6" y="975.8" width="1.7" height="6" fill="#d4d4d4"/><rect x="15.6" y="972.8" width="1.7" height="1.7" fill="#d4d4d4"/>
<path d="M39.6 972 H46.4 V975 Q46.4 977.6 43 977.6 Q39.6 977.6 39.6 975Z" fill="#d4d4d4"/><path d="M32 979 L38 977.2 L42 978.4 L47 976.4 L46.4 981 H32Z" fill="#d4d4d4"/>
<circle cx="63.5" cy="977.6" r="5" fill="none" stroke="#d4d4d4" stroke-width="3.4" stroke-dasharray="2.7 1.23"/><circle cx="63.5" cy="977.6" r="4.1" fill="none" stroke="#d4d4d4" stroke-width="2.6"/></svg>
<div class="a" style="left:1898px;top:9px;width:10.5px;height:10px;background:#c9c9c9;"></div>
</div>
<svg style="left:265px;top:183px" width="1467" height="692" viewBox="265 183 1467 692"><rect x="593" y="859" width="791" height="9" fill="#333333"/>
<rect x="1716" y="323.5" width="8.5" height="414" fill="#333333"/>
<g fill="none" stroke="#ffffff" stroke-width="1.9"><rect x="1637.9" y="779.8" width="40.9" height="51.3" stroke-width="2.4"/><path d="M 1643.01,779.8 V 831.1" stroke-width="2.1"/><path d="M 1648.12,779.8 V 831.1" stroke-width="2.1"/><path d="M 1653.24,779.8 V 831.1" stroke-width="2.1"/><path d="M 1658.35,779.8 V 831.1" stroke-width="2.1"/><path d="M 1663.46,779.8 V 831.1" stroke-width="2.1"/><path d="M 1668.58,779.8 V 831.1" stroke-width="2.1"/><path d="M 1673.69,779.8 V 831.1" stroke-width="2.1"/><path d="M 1633.4,764.6 L 1647.8,766.1 L 1648,762.4 L 1671.2,764.5 L 1671,768.5 L 1684.2,769.8 L 1683.6,774.8 L 1632.8,769.6 Z"/></g>
<path d="M 390.5,382 H 409.25 l 7.5,5 3.75,0 7.5,-5 H 630.7 V 425.7 H 508.1 l -7.5,5 -3.75,0 -7.5,-5 H 480.6 a 10,10 0 0,0 -10,10 V 697.5 a 10,10 0 0,0 10,10 H 630.4 V 720.4 H 428 l -7.5,5 -3.75,0 -7.5,-5 H 400.5 a 10,10 0 0,1 -10,-10 Z" fill="#609960" stroke="#93ba93" stroke-width="1.25" stroke-linejoin="round"/>
<path d="M 390.5,314.3 c 37.5,-18.75 87.5,-18.75 125,0 H 907.4 V 381.6 H 428 l -7.5,5 -3.75,0 -7.5,-5 H 390.5 Z" fill="#7d9960" stroke="#a7ba93" stroke-width="1.25" stroke-linejoin="round"/>
<text x="403.85" y="337" font-size="18.25" fill="#ffffff" textLength="381.12" lengthAdjust="spacing">Event-auslöser - Ausgelöst von äußerem Aufruf</text>
<text x="403.85" y="371" font-size="18.25" fill="#ffffff" textLength="245.97" lengthAdjust="spacing">oder wenn (globaler Auslöser):</text>
<rect x="659" y="354" width="242" height="21.4" rx="5" ry="5" fill="#cbd6bf"/>
<text x="665.35" y="371" font-size="18.25" fill="#000000" textLength="212.56" lengthAdjust="spacing">Kein zusätzlicher Auslöser</text>
<path d="M 883.8,355.4 h 6.6 l -3.3,5.9 Z" fill="#7d9960"/>
<text x="403.84" y="411" font-size="18.25" fill="#ffffff" textLength="86.94" lengthAdjust="spacing">wiederhole</text>
<path d="M 511.6,388.2 H 564.5 V 421.4 H 511.6 V 413.2 c 0,-12.5 -10,10 -10,-9.38 s 10,3.12 10,-9.38 Z" fill="#606a99" stroke="#939aba" stroke-width="1.25" stroke-linejoin="round"/>
<rect x="517.8" y="394.2" width="40.4" height="21.2" rx="5" ry="5" fill="#bfc3d6"/>
<text x="525.6" y="410" font-size="15.5" fill="#000000">∞</text>
<path d="M 543.8,395.8 h 6.6 l -3.3,5.9 Z" fill="#606a99"/>
<text x="576.95" y="411" font-size="18.25" fill="#ffffff" textLength="39.84" lengthAdjust="spacing">-mal:</text>
<text x="403.85" y="450" font-size="18.25" fill="#ffffff" textLength="53.43" lengthAdjust="spacing">mache</text>
<path d="M 470.9,436.3 a 10,10 0 0,1 10,-10 H 489.65 l 7.5,5 3.75,0 7.5,-5 H 588.3 V 432.55 c 0,12.5 -10,-10 -10,9.38 s 10,-3.12 10,9.38 V 484.2 H 588.2 l -7.5,5 -3.75,0 -7.5,-5 H 560.7 a 10,10 0 0,0 -10,10 V 680.2 a 10,10 0 0,0 10,10 H 588.2 V 703.1 H 508.4 l -7.5,5 -3.75,0 -7.5,-5 H 480.9 a 10,10 0 0,1 -10,-10 Z" fill="#607d99" stroke="#93a7ba" stroke-width="1.25" stroke-linejoin="round"/>
<g transform="translate(482.9,446.8) scale(1.25)"><rect x="0.3" y="0.3" width="15.6" height="15.6" rx="4" ry="4" fill="#0000ff" stroke="#ffffff" stroke-width="1"/><path fill="#fff" transform="translate(8.1 8.1) scale(1.06) translate(-8 -8)" d="m4.203,7.296 0,1.368 -0.92,0.677 -0.11,0.41 0.9,1.559 0.41,0.11 1.043,-0.457 1.187,0.683 0.127,1.134 0.3,0.3 1.8,0 0.3,-0.299 0.127,-1.138 1.185,-0.682 1.046,0.458 0.409,-0.11 0.9,-1.559 -0.11,-0.41 -0.92,-0.677 0,-1.366 0.92,-0.677 0.11,-0.41 -0.9,-1.559 -0.409,-0.109 -1.046,0.458 -1.185,-0.682 -0.127,-1.138 -0.3,-0.299 -1.8,0 -0.3,0.3 -0.126,1.135 -1.187,0.682 -1.043,-0.457 -0.41,0.11 -0.899,1.559 0.108,0.409z"/><circle cx="8.1" cy="8.1" r="2.1" fill="#0000ff"/></g>
<text x="516.75" y="462" font-size="18.25" fill="#ffffff" textLength="31.87" lengthAdjust="spacing">falls</text>
<text x="483.35" y="507" font-size="18.25" fill="#ffffff" textLength="54.13" lengthAdjust="spacing">mache</text>
<path d="M 588.9,426.6 H 1369.4 V 483.3 H 588.9 V 451.6 c 0,-12.5 -10,10 -10,-9.38 s 10,3.12 10,-9.38 Z" fill="#606a99" stroke="#939aba" stroke-width="1.25" stroke-linejoin="round"/>
<path d="M 608.7,433 H 1264.1 V 479.1 H 608.7 V 458 c 0,-12.5 -10,10 -10,-9.38 s 10,3.12 10,-9.38 Z" fill="#606a99" stroke="#939aba" stroke-width="1.25" stroke-linejoin="round"/>
<text x="621.35" y="462" font-size="18.25" fill="#ffffff" textLength="56.67" lengthAdjust="spacing">Erhalte</text>
<text x="691.75" y="462" font-size="18.25" fill="#ffffff" textLength="56.07" lengthAdjust="spacing">Global:</text>
<rect x="756" y="446" width="201.8" height="20.8" rx="5" ry="5" fill="#bfc3d6"/>
<text x="761.85" y="462" font-size="18.25" fill="#000000" textLength="172.96" lengthAdjust="spacing">sprengsatzdetonation</text>
<path d="M 941.6,447.5 h 6.6 l -3.3,5.9 Z" fill="#606a99"/>
<text x="964.05" y="462" font-size="18.25" fill="#ffffff" textLength="81.56" lengthAdjust="spacing">für Entität:</text>
<path d="M 1067.5,439.3 H 1251.5 V 473.1 H 1067.5 V 464.3 c 0,-12.5 -10,10 -10,-9.38 s 10,3.12 10,-9.38 Z" fill="#608b99" stroke="#93b0ba" stroke-width="1.25" stroke-linejoin="round"/>
<text x="1080.05" y="462" font-size="18.25" fill="#ffffff" textLength="157.2" lengthAdjust="spacing">Ereignis/Ziel-Entität</text>
<rect x="1270.2" y="445.6" width="37.4" height="21.1" rx="5" ry="5" fill="#bfc3d6"/>
<text x="1276.2" y="462" font-size="18.25" fill="#000000">=</text>
<path d="M 1293.2,447.5 h 6.6 l -3.3,5.9 Z" fill="#606a99"/>
<path d="M 1321.5,439.3 H 1357.1 V 473.1 H 1321.5 V 464.3 c 0,-12.5 -10,10 -10,-9.38 s 10,3.12 10,-9.38 Z" fill="#606a99" stroke="#939aba" stroke-width="1.25" stroke-linejoin="round"/>
<rect x="1328" y="445.6" width="22.6" height="21.1" rx="5" ry="5" fill="#bfc3d6"/>
<text x="1334.3" y="462" font-size="18.25" fill="#000000">1</text>
<path d="M 550.8,530.5 H 569.55 l 7.5,5 3.75,0 7.5,-5 H 921.7 V 575 H 634 l -7.5,5 -3.75,0 -7.5,-5 H 606.5 a 10,10 0 0,0 -10,10 V 661.8 a 10,10 0 0,0 10,10 H 921.6 V 685.3 H 588.3 l -7.5,5 -3.75,0 -7.5,-5 H 560.8 a 10,10 0 0,1 -10,-10 Z" fill="#609960" stroke="#93ba93" stroke-width="1.25" stroke-linejoin="round"/>
<path d="M 550.8,494.7 a 10,10 0 0,1 10,-10 H 569.55 l 7.5,5 3.75,0 7.5,-5 H 1608.3 V 530.2 H 588.3 l -7.5,5 -3.75,0 -7.5,-5 H 550.8 Z" fill="#998160" stroke="#baa993" stroke-width="1.25" stroke-linejoin="round"/>
<text x="563.65" y="514" font-size="18.25" fill="#ffffff" textLength="49.7" lengthAdjust="spacing">Spiele</text>
<rect x="620.7" y="497.2" width="299.3" height="20.7" rx="5" ry="5" fill="#d6cdbf"/>
<text x="627.55" y="514" font-size="18.25" fill="#000000" textLength="282.99" lengthAdjust="spacing">CUSTOM:block.fernzuender.record</text>
<text x="927.35" y="514" font-size="18.25" fill="#ffffff" textLength="41.2" lengthAdjust="spacing">bei x:</text>
<path d="M 990.2,490.5 H 1024.7 V 524.3 H 990.2 V 515.5 c 0,-12.5 -10,10 -10,-9.38 s 10,3.12 10,-9.38 Z" fill="#606a99" stroke="#939aba" stroke-width="1.25" stroke-linejoin="round"/>
<text x="1003.04" y="513.7" font-size="18.25" fill="#ffffff">x</text>
<text x="1037.15" y="514" font-size="18.25" fill="#ffffff">y:</text>
<path d="M 1071.3,490.5 H 1105.8 V 524.3 H 1071.3 V 515.5 c 0,-12.5 -10,10 -10,-9.38 s 10,3.12 10,-9.38 Z" fill="#606a99" stroke="#939aba" stroke-width="1.25" stroke-linejoin="round"/>
<text x="1084.14" y="513.7" font-size="18.25" fill="#ffffff">y</text>
<text x="1118.05" y="514" font-size="18.25" fill="#ffffff">z:</text>
<path d="M 1152.2,490.5 H 1186.7 V 524.3 H 1152.2 V 515.5 c 0,-12.5 -10,10 -10,-9.38 s 10,3.12 10,-9.38 Z" fill="#606a99" stroke="#939aba" stroke-width="1.25" stroke-linejoin="round"/>
<text x="1165.04" y="513.7" font-size="18.25" fill="#ffffff">z</text>
<text x="1199.45" y="514" font-size="18.25" fill="#ffffff" textLength="46.97" lengthAdjust="spacing">Level:</text>
<path d="M 1267.6,490.5 H 1303.4 V 524.3 H 1267.6 V 515.5 c 0,-12.5 -10,10 -10,-9.38 s 10,3.12 10,-9.38 Z" fill="#606a99" stroke="#939aba" stroke-width="1.25" stroke-linejoin="round"/>
<rect x="1274.2" y="497.1" width="22.6" height="20.9" rx="5" ry="5" fill="#bfc3d6"/>
<text x="1280.42" y="513.7" font-size="18.25" fill="#000000">1</text>
<text x="1316.45" y="514" font-size="18.25" fill="#ffffff" textLength="43.92" lengthAdjust="spacing">Pitch:</text>
<path d="M 1381.2,490.5 H 1417 V 524.3 H 1381.2 V 515.5 c 0,-12.5 -10,10 -10,-9.38 s 10,3.12 10,-9.38 Z" fill="#606a99" stroke="#939aba" stroke-width="1.25" stroke-linejoin="round"/>
<rect x="1387.8" y="497.1" width="22.6" height="20.9" rx="5" ry="5" fill="#bfc3d6"/>
<text x="1394.02" y="513.7" font-size="18.25" fill="#000000">1</text>
<text x="1429.15" y="514" font-size="18.25" fill="#ffffff" textLength="81.88" lengthAdjust="spacing">Kategorie:</text>
<rect x="1519.2" y="497.2" width="82.4" height="20.4" rx="5" ry="5" fill="#d6cdbf"/>
<text x="1524.75" y="514" font-size="18.25" fill="#000000" textLength="55.46" lengthAdjust="spacing">neutral</text>
<path d="M 1587.2,498.6 h 6.6 l -3.3,5.9 Z" fill="#998160"/>
<text x="563.65" y="560" font-size="18.25" fill="#ffffff" textLength="35.86" lengthAdjust="spacing">Wait</text>
<path d="M 619.7,536.5 H 675.4 V 570.3 H 619.7 V 561.5 c 0,-12.5 -10,10 -10,-9.38 s 10,3.12 10,-9.38 Z" fill="#606a99" stroke="#939aba" stroke-width="1.25" stroke-linejoin="round"/>
<rect x="626.3" y="543.1" width="42.5" height="20.9" rx="5" ry="5" fill="#bfc3d6"/>
<text x="632.32" y="559.7" font-size="18.25" fill="#000000">220</text>
<text x="688.35" y="560" font-size="18.25" fill="#ffffff" textLength="195.97" lengthAdjust="spacing">ticks then on server-side</text>
<g fill="none" stroke="#e8e8e8" stroke-width="1.1"><rect x="899.5" y="538.3" width="10" height="11"/><path d="M 901.5,541.3 h 2 M 905.5,541.3 h 1.5 M 901.5,543.8 h 6 M 901.5,546.3 h 6"/></g>
<text x="563.65" y="599" font-size="18.25" fill="#ffffff">do</text>
<path d="M 596.6,621.4 H 615.35 l 7.5,5 3.75,0 7.5,-5 H 1342.7 V 667.5 H 634.1 l -7.5,5 -3.75,0 -7.5,-5 H 606.6 a 10,10 0 0,1 -10,-10 Z" fill="#998160" stroke="#baa993" stroke-width="1.25" stroke-linejoin="round"/>
<path d="M 596.6,585.4 a 10,10 0 0,1 10,-10 H 615.35 l 7.5,5 3.75,0 7.5,-5 H 996.7 V 621.1 H 634.1 l -7.5,5 -3.75,0 -7.5,-5 H 596.6 Z" fill="#999960" stroke="#baba93" stroke-width="1.25" stroke-linejoin="round"/>
<text x="609.25" y="605" font-size="18.25" fill="#ffffff" textLength="164.63" lengthAdjust="spacing">Entferne Block bei x:</text>
<path d="M 796.6,581.5 H 831.1 V 615.3 H 796.6 V 606.5 c 0,-12.5 -10,10 -10,-9.38 s 10,3.12 10,-9.38 Z" fill="#606a99" stroke="#939aba" stroke-width="1.25" stroke-linejoin="round"/>
<text x="809.44" y="604.7" font-size="18.25" fill="#ffffff">x</text>
<text x="843.75" y="605" font-size="18.25" fill="#ffffff">:</text>
<path d="M 868.4,581.5 H 902.9 V 615.3 H 868.4 V 606.5 c 0,-12.5 -10,10 -10,-9.38 s 10,3.12 10,-9.38 Z" fill="#606a99" stroke="#939aba" stroke-width="1.25" stroke-linejoin="round"/>
<text x="881.24" y="604.7" font-size="18.25" fill="#ffffff">y</text>
<text x="914.95" y="605" font-size="18.25" fill="#ffffff">z:</text>
<path d="M 949.2,581.5 H 983.7 V 615.3 H 949.2 V 606.5 c 0,-12.5 -10,10 -10,-9.38 s 10,3.12 10,-9.38 Z" fill="#606a99" stroke="#939aba" stroke-width="1.25" stroke-linejoin="round"/>
<text x="962.04" y="604.7" font-size="18.25" fill="#ffffff">z</text>
<text x="609.25" y="651" font-size="18.25" fill="#ffffff" textLength="142.29" lengthAdjust="spacing">Explodieren bei x:</text>
<path d="M 774.5,627.6 H 809 V 661.4 H 774.5 V 652.6 c 0,-12.5 -10,10 -10,-9.38 s 10,3.12 10,-9.38 Z" fill="#606a99" stroke="#939aba" stroke-width="1.25" stroke-linejoin="round"/>
<text x="787.34" y="650.8" font-size="18.25" fill="#ffffff">x</text>
<text x="821.55" y="651" font-size="18.25" fill="#ffffff">y:</text>
<path d="M 855.2,627.6 H 889.7 V 661.4 H 855.2 V 652.6 c 0,-12.5 -10,10 -10,-9.38 s 10,3.12 10,-9.38 Z" fill="#606a99" stroke="#939aba" stroke-width="1.25" stroke-linejoin="round"/>
<text x="868.04" y="650.8" font-size="18.25" fill="#ffffff">y</text>
<text x="901.75" y="651" font-size="18.25" fill="#ffffff">z:</text>
<path d="M 936,627.6 H 970.5 V 661.4 H 936 V 652.6 c 0,-12.5 -10,10 -10,-9.38 s 10,3.12 10,-9.38 Z" fill="#606a99" stroke="#939aba" stroke-width="1.25" stroke-linejoin="round"/>
<text x="948.84" y="650.8" font-size="18.25" fill="#ffffff">z</text>
<text x="983.55" y="651" font-size="18.25" fill="#ffffff" textLength="67.06" lengthAdjust="spacing">mit Kraft</text>
<path d="M 1071,627.6 H 1106.8 V 661.4 H 1071 V 652.6 c 0,-12.5 -10,10 -10,-9.38 s 10,3.12 10,-9.38 Z" fill="#606a99" stroke="#939aba" stroke-width="1.25" stroke-linejoin="round"/>
<rect x="1077.6" y="634.2" width="22.6" height="20.9" rx="5" ry="5" fill="#bfc3d6"/>
<text x="1083.82" y="650.8" font-size="18.25" fill="#000000">6</text>
<text x="1119.15" y="651" font-size="18.25" fill="#ffffff" textLength="124.21" lengthAdjust="spacing">Ursprungs-Typ:</text>
<rect x="1251.6" y="634.2" width="62.1" height="20.8" rx="5" ry="5" fill="#d6cdbf"/>
<text x="1258.35" y="651" font-size="18.25" fill="#000000" textLength="33.68" lengthAdjust="spacing">TNT</text>
<path d="M 1299,635.6 h 6.6 l -3.3,5.9 Z" fill="#998160"/>
<g fill="none" stroke="#e8e8e8" stroke-width="1.1"><rect x="1320.5" y="630.1" width="10" height="11"/><path d="M 1322.5,633.1 h 2 M 1326.5,633.1 h 1.5 M 1322.5,635.6 h 6 M 1322.5,638.1 h 6"/></g></svg>
</div></body></html>
